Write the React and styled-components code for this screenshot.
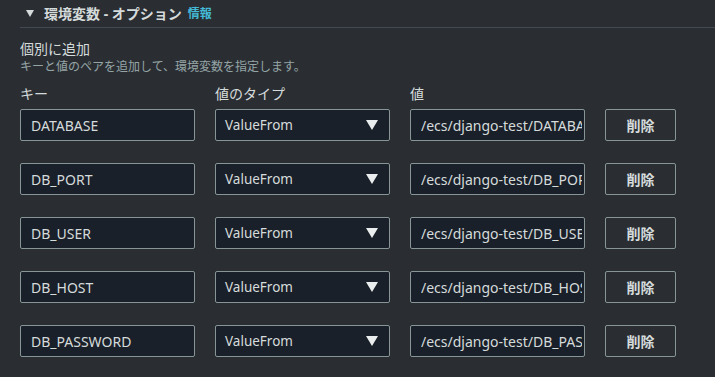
import React from 'react';
import styled, { createGlobalStyle } from 'styled-components';

const GlobalStyle = createGlobalStyle`
  html, body {
    margin: 0;
    padding: 0;
    background: #2a2e33;
  }
  body {
    font-family: "Noto Sans", "Noto Sans CJK JP", sans-serif;
    color: #d5dbdb;
  }
`;

const SectionSC = styled.div`
  width: 715px;
  height: 377px;
  overflow: hidden;
  background: #2a2e33;
`;

const HeaderSC = styled.div`
  display: flex;
  align-items: center;
  height: 28px;
  box-sizing: border-box;
  margin-left: 20px;
  padding-left: 6px;
  border-bottom: 1px solid #434a53;

  .caret {
    width: 0;
    height: 0;
    border-left: 4px solid transparent;
    border-right: 4px solid transparent;
    border-top: 7px solid #d5dbdb;
    margin-right: 10px;
  }

  .title {
    font-size: 14px;
    font-weight: 700;
    color: #d5dbdb;
    line-height: 20px;
  }

  .info {
    margin-left: 6px;
    font-size: 12px;
    font-weight: 700;
    color: #44b9d6;
    line-height: 20px;
  }
`;

const BodySC = styled.div`
  padding: 11px 20px 0;
`;

const TitleSC = styled.div`
  font-size: 14px;
  line-height: 20px;
  color: #d5dbdb;
`;

const DescSC = styled.div`
  font-size: 12px;
  line-height: 16px;
  color: #95a5a6;
`;

const GridSC = styled.div`
  display: grid;
  grid-template-columns: 175px 175px 175px 71px;
  column-gap: 20px;
  margin-top: 9px;
`;

const LabelSC = styled.div`
  font-size: 14px;
  line-height: 20px;
  color: #d5dbdb;
  margin-bottom: 5px;
`;

const RowsSC = styled.div`
  display: flex;
  flex-direction: column;
  gap: 22px;
`;

const RowSC = styled.div`
  display: grid;
  grid-template-columns: 175px 175px 175px 71px;
  column-gap: 20px;
`;

const InputSC = styled.input`
  box-sizing: border-box;
  width: 175px;
  height: 32px;
  padding: 0 2px 0 10px;
  background: #1a2029;
  border: 1px solid #879596;
  border-radius: 2px;
  color: #d5dbdb;
  font-family: "Noto Sans", "Noto Sans CJK JP", sans-serif;
  font-size: 14px;
  outline: none;
`;

const SelectSC = styled.div`
  box-sizing: border-box;
  height: 32px;
  display: flex;
  align-items: center;
  justify-content: space-between;
  padding: 0 11px 0 9px;
  background: #1a2029;
  border: 1px solid #879596;
  border-radius: 2px;
  font-size: 13.5px;
  color: #d5dbdb;

  .arrow {
    width: 0;
    height: 0;
    border-left: 6px solid transparent;
    border-right: 6px solid transparent;
    border-top: 10px solid #eaeded;
  }
`;

const ButtonSC = styled.button`
  box-sizing: border-box;
  height: 32px;
  background: transparent;
  border: 1px solid #879596;
  border-radius: 2px;
  color: #d5dbdb;
  font-family: "Noto Sans", "Noto Sans CJK JP", sans-serif;
  font-size: 14px;
  font-weight: 700;
  padding: 0;
`;

const vars = ['DATABASE', 'DB_PORT', 'DB_USER', 'DB_HOST', 'DB_PASSWORD'];

const App = () => (
  <SectionSC>
    <GlobalStyle />
    <HeaderSC>
      <span className="caret" />
      <span className="title">環境変数 - オプション</span>
      <span className="info">情報</span>
    </HeaderSC>
    <BodySC>
      <TitleSC>個別に追加</TitleSC>
      <DescSC>キーと値のペアを追加して、環境変数を指定します。</DescSC>
      <GridSC>
        <LabelSC>キー</LabelSC>
        <LabelSC>値のタイプ</LabelSC>
        <LabelSC>値</LabelSC>
        <div />
      </GridSC>
      <RowsSC>
        {vars.map((name) => (
          <RowSC key={name}>
            <InputSC readOnly value={name} />
            <SelectSC>
              <span>ValueFrom</span>
              <span className="arrow" />
            </SelectSC>
            <InputSC readOnly value={`/ecs/django-test/${name}`} />
            <ButtonSC>削除</ButtonSC>
          </RowSC>
        ))}
      </RowsSC>
    </BodySC>
  </SectionSC>
);

export default App;
